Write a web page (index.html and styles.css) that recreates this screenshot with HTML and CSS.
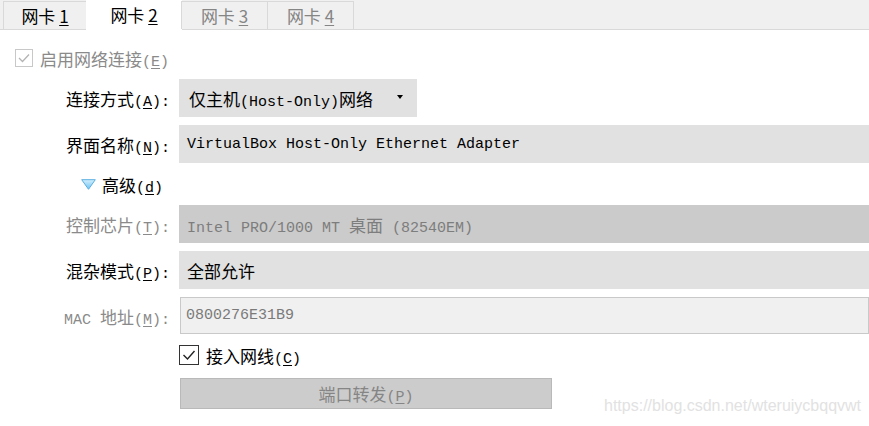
FILE: index.html
```html
<!DOCTYPE html>
<html lang="zh-CN">
<head>
<meta charset="utf-8">
<title>网卡</title>
<link rel="stylesheet" href="styles.css">
</head>
<body>
<div class="tabs">
  <div class="tab"><span>网卡 <u>1</u></span></div>
  <div class="tab active"><span>网卡 <u>2</u></span></div>
  <div class="tab dis"><span>网卡 <u>3</u></span></div>
  <div class="tab dis"><span>网卡 <u>4</u></span></div>
</div>
<div class="content">
  <div class="enable">
    <svg class="cb cb-dis" width="18" height="18" viewBox="0 0 18 18"><rect x="0.5" y="0.5" width="17" height="17" fill="#fff" stroke="#c8c8c8"/><polyline points="4,9 7.5,12.5 14,5.5" fill="none" stroke="#b4b4b4" stroke-width="1.3"/></svg>
    <span class="dis-text">启用网络连接<span class="m">(<u>E</u>)</span></span>
  </div>
  <div class="form">
    <div class="lbl"><span>连接方式<span class="m">(<u>A</u>):</span></span></div>
    <div class="box combo"><span>仅主机<span class="m">(Host-Only)</span>网络</span><span class="arrow"></span></div>

    <div class="lbl"><span>界面名称<span class="m">(<u>N</u>):</span></span></div>
    <div class="box"><span class="m">VirtualBox Host-Only Ethernet Adapter</span></div>

    <div class="adv">
      <svg width="15" height="11" viewBox="0 0 15 11"><defs><linearGradient id="g" x1="0" y1="0" x2="0" y2="1"><stop offset="0" stop-color="#d4effd"/><stop offset="1" stop-color="#6cc3f2"/></linearGradient></defs><polygon points="0.7,0.7 14.3,0.7 7.5,10.3" fill="url(#g)" stroke="#5aaee0" stroke-width="1"/></svg>
      <span>高级<span class="m">(<u>d</u>)</span></span>
    </div>

    <div class="lbl dis-text"><span>控制芯片<span class="m">(<u>T</u>):</span></span></div>
    <div class="box chip"><span class="m">Intel PRO/1000 MT <span class="cjk">桌面</span> (82540EM)</span></div>

    <div class="lbl"><span>混杂模式<span class="m">(<u>P</u>):</span></span></div>
    <div class="box">全部允许</div>

    <div class="lbl dis-text"><span><span class="m">MAC </span>地址<span class="m">(<u>M</u>):</span></span></div>
    <div class="box mac"><span class="m">0800276E31B9</span></div>

    <div></div>
    <div class="cable">
      <svg class="cb" width="20" height="20" viewBox="0 0 20 20"><rect x="0.5" y="0.5" width="19" height="19" fill="#fff" stroke="#333"/><polyline points="4.5,10 8.5,14 15.5,6" fill="none" stroke="#222" stroke-width="1.4"/></svg>
      <span>接入网线<span class="m">(<u>C</u>)</span></span>
    </div>

    <div></div>
    <div class="btn-wrap"><div class="btn"><span>端口转发<span class="m">(<u>P</u>)</span></span></div></div>
  </div>
</div>
<div class="watermark">https://blog.csdn.net/wteruiycbqqvwt</div>
</body>
</html>
```
FILE: styles.css
```css
html, body {
  margin: 0;
  padding: 0;
  background: #fff;
}
body {
  width: 869px;
  height: 426px;
  overflow: hidden;
  position: relative;
  font-family: "Noto Sans CJK SC", "Noto Sans", sans-serif;
  font-size: 17px;
  color: #000;
}
.m {
  font-family: "Liberation Mono", "Noto Sans CJK SC", monospace;
  font-size: 15px;
}
.cjk {
  font-family: "Noto Sans CJK SC", sans-serif;
  font-size: 17px;
}
u {
  text-decoration: underline;
  text-underline-offset: 2px;
}
.tabs {
  display: flex;
  align-items: flex-end;
  height: 29px;
  background: #f0f0f0;
  border-bottom: 1px solid #d9d9d9;
  padding-left: 3px;
}
.tab {
  box-sizing: border-box;
  width: 84px;
  height: 28px;
  border: 1px solid #d9d9d9;
  border-bottom: none;
  margin-left: -1px;
  display: flex;
  align-items: center;
  justify-content: center;
  line-height: 1;
  padding-bottom: 1px;
  white-space: pre;
}
.tab:first-child {
  margin-left: 0;
}
.tab.active {
  width: 96px;
  height: 30px;
  margin-bottom: -1px;
  background: #fff;
  border: none;
  padding-bottom: 2px;
}
.tab.dis {
  color: #858585;
  width: 87px;
}
.content {
  padding-top: 15px;
}
.enable {
  display: flex;
  align-items: center;
  height: 26px;
  padding-left: 15px;
  gap: 7px;
}
.dis-text {
  color: #8a8a8a;
}
.form {
  display: grid;
  grid-template-columns: 170px 1fr;
  column-gap: 9px;
  row-gap: 8px;
  margin-top: 8px;
}
.lbl {
  display: flex;
  align-items: center;
  justify-content: flex-end;
  height: 38px;
  white-space: pre;
}
.box {
  box-sizing: border-box;
  height: 38px;
  background: #e1e1e1;
  display: flex;
  align-items: center;
  padding-left: 8px;
  white-space: pre;
}
.combo {
  width: 238px;
  padding-left: 10px;
  padding-right: 14px;
  justify-content: space-between;
}
.arrow {
  width: 0;
  height: 0;
  border-left: 3px solid transparent;
  border-right: 3px solid transparent;
  border-top: 4px solid #000;
  margin-top: -2px;
}
.chip {
  background: #cbcbcb;
  color: #7d7d7d;
}
.mac {
  height: 37px;
  background: #f0f0f0;
  border: 1px solid #c9c9c9;
  margin-left: 1px;
  padding-left: 5px;
  color: #7a7a7a;
}
.adv {
  grid-column: 1 / span 2;
  height: 26px;
  display: flex;
  align-items: center;
  gap: 6px;
  padding-left: 81px;
}
.adv svg {
  margin-top: 1px;
}
.cable {
  display: flex;
  align-items: center;
  height: 24px;
  gap: 7px;
}
.btn-wrap {
  margin-top: 3px;
  padding-left: 1px;
}
.btn {
  box-sizing: border-box;
  width: 372px;
  height: 31px;
  background: #cccccc;
  border: 1px solid #b9b9b9;
  color: #858585;
  display: flex;
  align-items: center;
  justify-content: center;
}
.watermark {
  position: absolute;
  left: 604px;
  top: 397px;
  font-family: "Liberation Sans", Arial, sans-serif;
  font-size: 16px;
  color: #e2e2e2;
  white-space: nowrap;
}
```
